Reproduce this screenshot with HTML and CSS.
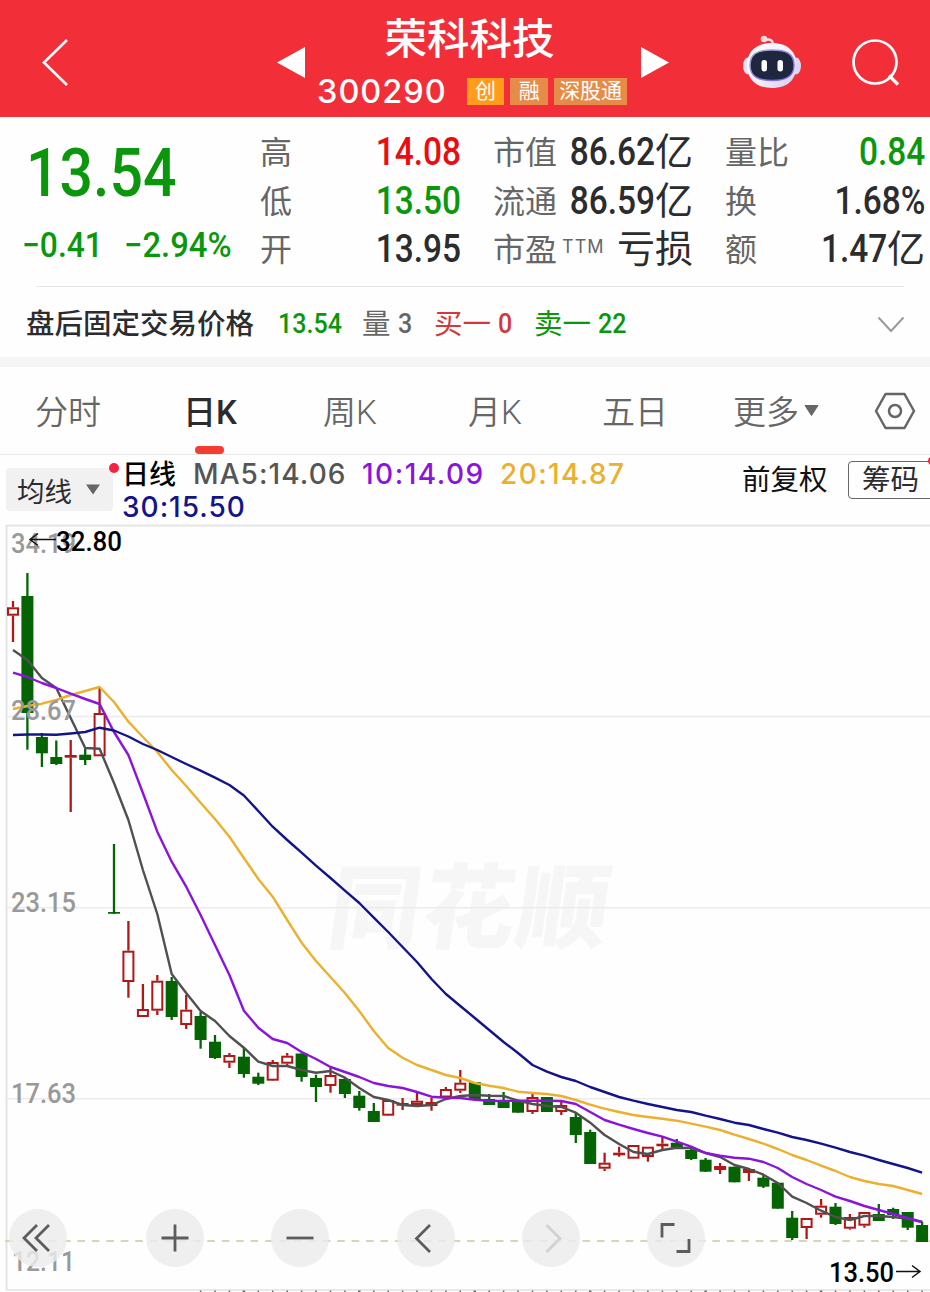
FILE: index.html
```html
<!DOCTYPE html>
<html lang="zh-CN">
<head>
<meta charset="utf-8">
<title>荣科科技 300290</title>
<link rel="stylesheet" href="styles.css">
</head>
<body>
<header class="header">
  <svg class="back" width="30" height="50" viewBox="0 0 30 50"><path d="M26 3 L3 25.500 L26 48" fill="none" stroke="#fff" stroke-width="2.600"/></svg>
  <svg class="prev" width="28" height="31" viewBox="0 0 28 31"><path d="M0 15.500 L28 0 V31Z" fill="#fff"/></svg>
  <div class="title">
    <h1 class="name">荣科科技</h1>
    <div class="sub">
      <span class="code">300290</span>
      <span class="tag tag-hot">创</span>
      <span class="tag">融</span>
      <span class="tag tag-wide">深股通</span>
    </div>
  </div>
  <svg class="next" width="28" height="31" viewBox="0 0 28 31"><path d="M28 15.500 L0 0 V31Z" fill="#fff"/></svg>
  <svg class="robot" width="60" height="56" viewBox="0 0 60 56">
    <defs>
      <linearGradient id="shell" x1="0" y1="0" x2="1" y2="1"><stop offset="0" stop-color="#fff"/><stop offset=".6" stop-color="#f0edfb"/><stop offset="1" stop-color="#cfc8f2"/></linearGradient>
      <linearGradient id="rim" x1="0" y1="0" x2="1" y2="1"><stop offset="0" stop-color="#aab0c8"/><stop offset="1" stop-color="#7a5cf0"/></linearGradient>
    </defs>
    <path d="M23 5 Q31 3 31 10" fill="none" stroke="#f6dce4" stroke-width="2.500"/>
    <circle cx="22" cy="4" r="3.300" fill="#f9d9df"/>
    <ellipse cx="6" cy="31" rx="5" ry="8.500" fill="#e6e1f7"/>
    <ellipse cx="54" cy="31" rx="5" ry="8.500" fill="#dcd6f4"/>
    <path d="M30 8 C46 8 54.500 17 54.500 30 C54.500 44 46 53 30 53 C14 53 5 44 5 30 C5 17 14 8 30 8Z" fill="url(#shell)"/>
    <path d="M30 15 C45 15 52 19 52 30 C52 41 45 45.500 30 45.500 C15 45.500 8 41 8 30 C8 19 15 15 30 15Z" fill="#1f2640" stroke="url(#rim)" stroke-width="1.400"/>
    <rect x="19.500" y="25" width="5.500" height="11.500" rx="2.700" fill="#fff"/>
    <rect x="35.500" y="25" width="5.500" height="11.500" rx="2.700" fill="#fff"/>
  </svg>
  <svg class="search" width="50" height="50" viewBox="0 0 50 50"><circle cx="23" cy="24" r="21.500" fill="none" stroke="#fff" stroke-width="2.700"/><path d="M37 37.500 L46 46.500" stroke="#fff" stroke-width="3.200"/></svg>
</header>

<section class="quote">
  <div class="last">
    <div class="price"><span class="num">13.54</span></div>
    <div class="change"><span class="num amount">−0.41</span><span class="num percent">−2.94%</span></div>
  </div>
  <dl class="stats stats-a">
    <dt>高</dt><dd class="up"><span class="num">14.08</span></dd>
    <dt>低</dt><dd class="down"><span class="num">13.50</span></dd>
    <dt>开</dt><dd><span class="num">13.95</span></dd>
  </dl>
  <dl class="stats stats-b">
    <dt>市值</dt><dd><span class="num">86.62</span>亿</dd>
    <dt>流通</dt><dd><span class="num">86.59</span>亿</dd>
    <dt>市盈<sup>TTM</sup></dt><dd>亏损</dd>
  </dl>
  <dl class="stats stats-c">
    <dt>量比</dt><dd class="down"><span class="num">0.84</span></dd>
    <dt>换</dt><dd><span class="num">1.68%</span></dd>
    <dt>额</dt><dd><span class="num">1.47</span>亿</dd>
  </dl>
</section>

<section class="after">
  <span class="after-label">盘后固定交易价格</span>
  <span class="after-price down"><span class="num">13.54</span></span>
  <span class="after-vol">量 <span class="num">3</span></span>
  <span class="after-buy">买一 <span class="num">0</span></span>
  <span class="after-sell down">卖一 <span class="num">22</span></span>
  <svg class="chevron" width="28" height="18" viewBox="0 0 28 18"><path d="M1.500 1.500 L14 15 L26.500 1.500" fill="none" stroke="#999" stroke-width="2"/></svg>
</section>

<nav class="tabs">
  <span>分时</span>
  <span class="active">日K</span>
  <span>周K</span>
  <span>月K</span>
  <span>五日</span>
  <span class="more">更多<svg width="15" height="11" viewBox="0 0 15 11"><path d="M1 .5 H14 L7.500 10.500Z" fill="#666" stroke="#666" stroke-linejoin="round"/></svg></span>
  <svg class="gear" width="42" height="38" viewBox="0 0 42 38"><path d="M11.500 2 H30.500 L40 19 L30.500 36 H11.500 L2 19Z" fill="none" stroke="#666" stroke-width="2.500" stroke-linejoin="round"/><circle cx="21" cy="19" r="6" fill="none" stroke="#666" stroke-width="2.500"/></svg>
</nav>

<section class="legend">
  <div class="ma-button">均线<svg width="16" height="11" viewBox="0 0 16 11"><path d="M1 .5 H15 L8 10.500Z" fill="#666"/></svg><i class="dot"></i></div>
  <div class="ma-values">
    <div class="ma-line"><span class="period">日线</span><span class="ma5">MA5:14.06</span><span class="ma10">10:14.09</span><span class="ma20">20:14.87</span></div>
    <div class="ma-line ma30">30:15.50</div>
  </div>
  <span class="adjust">前复权</span>
  <span class="chips">筹码<i class="chips-dot"></i></span>
</section>

<main class="chart">
  <svg id="kline" width="930" height="768" viewBox="0 524 930 768"></svg>
  <div class="controls">
    <span class="ctl"><svg viewBox="0 0 58 58"><path d="M28 16 L15 29 L28 42 M40 16 L27 29 L40 42"/></svg></span>
    <span class="ctl"><svg viewBox="0 0 58 58"><path d="M29 15.500 V42.500 M15.500 29 H42.500"/></svg></span>
    <span class="ctl"><svg viewBox="0 0 58 58"><path d="M15.500 29 H42.500"/></svg></span>
    <span class="ctl"><svg viewBox="0 0 58 58"><path d="M33 16 L19.500 29.500 L33 43"/></svg></span>
    <span class="ctl off"><svg viewBox="0 0 58 58"><path d="M24.500 16 L38 29.500 L24.500 43"/></svg></span>
    <span class="ctl"><svg viewBox="0 0 58 58"><path d="M15 28.500 V15.500 H27.500 M42 30 V42.500 H29.500"/></svg></span>
  </div>
</main>
<script src="chart.js"></script>
</body>
</html>
```

FILE: styles.css
```css
* { box-sizing: border-box; }
body {
  margin: 0;
  width: 930px;
  height: 1292px;
  overflow: hidden;
  background: #fefefe;
  color: #2c2c2e;
  font-family: "Roboto", "Noto Sans CJK SC", sans-serif;
  white-space: nowrap;
}
svg { display: block; flex: none; }
.num {
  display: inline-block;
  font-family: "Roboto", sans-serif;
  font-weight: 500;
  transform: scaleX(.88);
  transform-origin: right center;
}
.up { color: #ea0d10; }
.down { color: #0b970b; }

.header {
  display: flex;
  height: 117px;
  background: #f22f38;
  color: #fff;
}
.back { margin: 37px 0 0 41px; }
.prev { margin: 47px 0 0 206px; }
.title { width: 310px; margin-left: 12px; }
.name {
  margin: 16px 0 0 -5px;
  height: 48px;
  line-height: 48px;
  font-size: 42.500px;
  font-weight: 500;
  text-align: center;
}
.sub { display: flex; align-items: center; height: 27px; margin-top: 14px; }
.code {
  width: 150px;
  font-family: "Inter", sans-serif;
  font-size: 32.500px;
  font-weight: 500;
  letter-spacing: 1px;
}
.tag {
  width: 38px;
  height: 27px;
  margin-right: 6px;
  background: #e68c48;
  font-size: 21px;
  line-height: 27px;
  text-align: center;
}
.tag-hot { background: #ff9c1e; }
.tag-wide { width: 73px; margin-right: 0; }
.next { margin: 47px 0 0 14px; }
.robot { margin: 35px 0 0 73px; }
.search { margin: 38px 0 0 50px; }

.quote {
  display: flex;
  height: 169px;
  padding-top: 11px;
}
.last { width: 260px; color: #0b970b; }
.last .num { transform-origin: left center; }
.price {
  height: 91px;
  padding-left: 26px;
  font-size: 67px;
  line-height: 91px;
}
.price .num { transform: scaleX(.88); }
.change { display: flex; height: 52px; padding-left: 22px; font-size: 34.500px; line-height: 52px; }
.change .amount { width: 102px; transform: scaleX(.92); }
.change .percent { transform: scaleX(.95); }
.stats {
  display: grid;
  grid-template-columns: 64px 1fr;
  grid-template-rows: repeat(3, 48.500px);
  line-height: 48.500px;
  margin: 0;
}
.stats-a { width: 201px; }
.stats-b { width: 200px; margin-left: 32px; }
.stats-c { width: 200px; margin-left: 32px; }
.stats dt { padding-top: 1px; font-size: 32px; color: #666; }
.stats dd { margin: 0; font-size: 38px; font-weight: 400; text-align: right; }
.stats sup {
  position: relative;
  top: -6px;
  margin-left: 5px;
  font-family: "Inter", sans-serif;
  font-size: 18px;
  line-height: 1;
  letter-spacing: 1px;
  vertical-align: middle;
}

.after {
  display: flex;
  position: relative;
  height: 81px;
  padding-left: 26px;
  border-bottom: 10px solid #f5f5f5;
  font-size: 28.500px;
  line-height: 78px;
}
.after::before {
  content: "";
  position: absolute;
  left: 36px;
  top: 0;
  width: 868px;
  height: 1px;
  background: #e6e6e6;
}
.after .num { position: relative; top: -1px; transform: scaleX(.88); transform-origin: left center; }
.after-label { width: 252px; font-weight: 500; }
.after-price { width: 84px; }
.after-vol { width: 72px; color: #666; }
.after-buy { width: 100px; color: #d13a3a; }
.after-sell { width: 343px; }
.chevron { margin-top: 30px; }

.tabs {
  display: grid;
  grid-template-columns: 149px 139px 145px 134px 131px 141px 42px;
  height: 88px;
  padding-left: 35px;
  border-bottom: 1px solid #e8e8e8;
  font-size: 33px;
  font-weight: 350;
  line-height: 91px;
  color: #666;
}
.active { position: relative; left: -1px; color: #2c2c2e; font-weight: 500; }
.active::after {
  content: "";
  position: absolute;
  left: 12px;
  bottom: 4px;
  width: 29px;
  height: 8px;
  border-radius: 4px;
  background: #f53b32;
}
.more { display: flex; align-items: center; gap: 5px; }
.more svg { margin-top: -4px; }
.gear { margin-top: 25px; }

.legend { display: flex; height: 69px; }
.legend > * { flex: none; }
.ma-button {
  position: relative;
  display: flex;
  align-items: center;
  width: 107px;
  height: 43px;
  margin: 13px 0 0 6px;
  padding-left: 11px;
  gap: 13px;
  border-radius: 4px;
  background: #f1f1f1;
  font-size: 27.500px;
}
.dot {
  position: absolute;
  right: -6px;
  top: -5px;
  width: 10px;
  height: 10px;
  border-radius: 50%;
  background: #f9223f;
}
.ma-values {
  width: 629px;
  padding: 3px 0 0 9px;
  font-family: "Inter", "Noto Sans CJK SC", sans-serif;
  font-size: 28px;
  font-weight: 500;
}
.ma-line { display: flex; height: 33px; line-height: 33px; }
.period { width: 71px; font-size: 27px; color: #000; }
.ma5 { width: 169px; letter-spacing: 1.100px; color: #555; }
.ma10 { width: 138px; letter-spacing: 1.500px; color: #8b14dc; }
.ma20 { letter-spacing: 1.400px; color: #eab02e; }
.ma30 { letter-spacing: 1px; color: #14148a; }
.adjust { width: 106px; line-height: 52px; font-size: 28.500px; color: #111; }
.chips {
  position: relative;
  width: 100px;
  height: 38px;
  margin-top: 6px;
  padding-left: 13px;
  border: 1.500px solid #666;
  border-radius: 4px;
  font-size: 28.500px;
  line-height: 38px;
}
.chips-dot {
  position: absolute;
  left: 79px;
  top: -5px;
  width: 8px;
  height: 8px;
  border-radius: 50%;
  background: #f9223f;
}

.chart { position: relative; height: 768px; }
.controls {
  position: absolute;
  left: 9px;
  top: 685px;
  display: flex;
  gap: 67.200px;
}
.ctl {
  width: 58px;
  height: 58px;
  border-radius: 50%;
  background: rgba(235, 235, 235, .82);
}
.ctl:first-child { margin-right: 12px; }
.ctl path { fill: none; stroke: #5c5c5c; stroke-width: 2.800; }
.off path { stroke: #d2d2d2; }
.axis { font-family: "Roboto", sans-serif; font-size: 27px; font-weight: 500; fill: #999; }
.mark { font-family: "Roboto", sans-serif; font-size: 27px; font-weight: 500; fill: #000; }
.watermark {
  font-family: "Noto Sans CJK SC", sans-serif;
  font-size: 92px;
  font-weight: 900;
  fill: #f6f6f6;
}
.series { fill: none; stroke-width: 2.400; stroke-linejoin: round; }
```

FILE: chart.js
```js
// Each candle: direction, high, body top, body bottom, low (chart y units).
const candles = [
  ['r',601,607.3,615.7,642],['g',573,596,713,749.7],['g',733,737,753.3,767],['g',740.5,757,764,765],
  ['r',740,755,757.7,812],['g',749,754.7,760,765],['r',688,713,756.3,756.3],['g',844,912,913.7,914],
  ['r',921,950.7,982,997.7],['r',984,1009,1017,1017],['r',975,980.7,1010.7,1015],['g',977,981,1017,1020],
  ['r',994.7,1009.7,1025,1029],['g',1012,1016,1040,1048.7],['g',1035,1041.7,1058,1059],['r',1053,1055,1062.7,1068],
  ['g',1047.7,1056.7,1074,1077.7],['g',1072.7,1076.7,1083.7,1085],['r',1060,1062,1080.7,1081],['r',1053,1055.7,1063.7,1067],
  ['g',1053.5,1053.5,1077,1081.7],['g',1074.7,1078,1087,1102],['r',1067,1075,1086,1092.7],['g',1077,1079,1094,1098],
  ['g',1091,1095.7,1108,1110.7],['g',1103,1111,1122,1122],['r',1100,1100,1115.7,1116],['r',1098,1103,1105.7,1110],
  ['r',1092,1100.7,1105,1107],['r',1098,1102,1106,1110.7],['r',1087,1089,1097.5,1097.5],['r',1070,1082.7,1090.7,1093],
  ['g',1082,1082,1099,1099],['g',1094,1099,1105,1105],['g',1092,1101.7,1108,1108],['g',1100,1100,1112.7,1112.7],
  ['r',1094,1097,1112,1114],['g',1097,1097,1112,1112],['r',1101.7,1105,1112,1115],['g',1112.7,1117,1135,1143],
  ['g',1129.7,1132,1164,1164],['r',1152.7,1162.7,1168.7,1171],['r',1146.7,1152.7,1154.3,1156.7],['r',1145,1145,1158.7,1158.7],
  ['r',1146.7,1146.7,1157,1161.7],['r',1137,1143.7,1145.7,1149],['g',1139,1142.7,1147.7,1147.7],['g',1149,1150,1159,1160],
  ['g',1158,1159.7,1171.7,1172],['r',1163,1166,1170,1174],['g',1166.7,1166.7,1182.3,1182.3],['r',1168,1169,1173,1181],
  ['g',1175,1177.7,1186.7,1188],['g',1182.7,1182.7,1208.7,1208.7],['g',1211,1217.7,1238,1240],['r',1218,1218,1228,1239],
  ['r',1199,1205.7,1214.7,1217.7],['g',1203,1206.7,1224,1225],['r',1214,1217,1228.7,1229.7],['r',1212,1212,1225.7,1227.7],
  ['g',1204,1214,1221,1221],['g',1207.7,1209,1215,1219],['g',1212,1212,1227.7,1230],['g',1221.7,1225,1242,1242]
];

const averages = {
  '#505050': [650,660,678,688,718,748,748.7,783,820,870,914,974,993,1011,1021,1036,1047.7,1061.7,1066,1066,1070,1072.7,1071,1077.7,1088,1097,1100,1105,1106,1105,1099,1096,1095,1095.7,1096,1100.7,1104,1106,1107,1112.7,1122.7,1135,1144,1152,1154,1150,1147.7,1148,1153,1157,1165,1169,1174.7,1183,1196.7,1203,1210.7,1217,1220,1216,1216,1217,1218.7,1222],
  '#eab02e': [709,706,703.7,700,695,691,687,702,721.7,737,752,770,786,802.7,819,836.7,858,879,896.7,920,942.7,961,977,993,1011,1031,1048,1057.7,1065,1070,1075,1078,1083,1085.7,1088,1091.7,1093,1094,1096,1100,1104.7,1108.7,1112,1115,1117,1118.7,1120.7,1123.7,1126.7,1130,1134.7,1139,1143.7,1149,1155,1160,1165.7,1171,1177,1181,1184,1186,1190,1194],
  '#8b14dc': [672.7,677,683,688,693.7,699,704,732,755,793,831.7,861.7,886.7,915,945,975,1010.7,1027.7,1039,1043,1052,1059,1067,1072,1077,1083,1086,1088,1092,1096.7,1097.7,1098,1099.7,1100.7,1101,1100.7,1100.7,1100.7,1101,1104,1112,1120,1124.7,1129,1133,1136.7,1141.7,1146.7,1153,1155.7,1157.7,1158.7,1162,1168,1177,1184,1190,1196.7,1201,1206,1210,1214,1218,1222],
  '#14148a': [735,734.5,734.5,734.7,733.5,732,727.7,730.5,736.5,744,750,757,764,770.7,777.7,785,795.5,811,826.7,840,852.7,865.7,878,890.7,903,917.7,932,947,962,979,994,1006,1018,1030,1042,1053,1065,1071.7,1077,1081,1087,1092,1097,1100.7,1104,1107,1110,1112,1115.7,1119,1122.7,1125,1129,1132.7,1137,1140,1143.7,1147.7,1152,1155.7,1160,1164,1168,1172.7]
};

const px = i => +(13 + 14.43 * i).toFixed(1);
const line = (x1, y1, x2, y2, color, width, extra = '') =>
  `<line x1="${x1}" y1="${y1}" x2="${x2}" y2="${y2}" stroke="${color}" stroke-width="${width}" ${extra}/>`;
const label = (cls, x, y, width, text) =>
  `<text class="${cls}" x="${x}" y="${y}" textLength="${width}" lengthAdjust="spacingAndGlyphs">${text}</text>`;

let out = '<text class="watermark" transform="translate(325 941) skewX(-8)" textLength="280">同花顺</text>';
for (const y of [716.5, 907.7, 1098.7]) out += line(7, y, 930, y, '#ebebeb', 1.5);
out += line(6, 525.5, 930, 525.5, '#e4e4e4', 2) + line(6.5, 525, 6.5, 1290, '#e2e2e2', 1.8);
out += line(6, 1290, 930, 1290, '#e2e2e2', 1.5);
out += line(5.3, 1241, 930, 1241, '#cdc89c', 1.6, 'stroke-dasharray="7.6 6.83"');
for (let i = 13; i < 64; i++) out += line(px(i), 1290.5, px(i), 1292, '#666', i % 8 === 0 ? 2.5 : 1.5);

candles.forEach(([dir, high, top, bottom, low], i) => {
  const x = px(i);
  if (dir === 'g') {
    out += line(x, high, x, low, '#046404', 2.3);
    out += `<rect x="${x - 6}" y="${top}" width="12" height="${Math.max(bottom - top, 1.5)}" fill="#046404"/>`;
  } else {
    out += line(x, high, x, top, '#b01818', 2.3) + line(x, bottom, x, low, '#b01818', 2.3);
    out += `<rect x="${x - 5}" y="${top + 1}" width="10" height="${Math.max(bottom - top - 2, .6)}" fill="#fefefe" stroke="#b01818" stroke-width="2"/>`;
  }
});

for (const [color, ys] of Object.entries(averages)) {
  out += `<polyline class="series" stroke="${color}" points="${ys.map((y, i) => px(i) + ',' + y).join(' ')}"/>`;
}

out += label('axis', 11, 552.5, 65, '34.19') + label('axis', 11, 720, 65, '28.67');
out += label('axis', 11, 911.5, 65, '23.15') + label('axis', 11, 1103, 65, '17.63') + label('axis', 12, 1270.5, 63, '12.11');
out += label('mark', 56, 550.5, 66, '32.80') + label('mark', 829, 1282, 65, '13.50');
out += '<path d="M56 539.500 H30 M38 533.500 L30 539.500 L38 545.500 M896 1271.500 H920 M912 1265.500 L920 1271.500 L912 1277.500" fill="none" stroke="#111" stroke-width="1.500"/>';
document.getElementById('kline').innerHTML = out;
```
